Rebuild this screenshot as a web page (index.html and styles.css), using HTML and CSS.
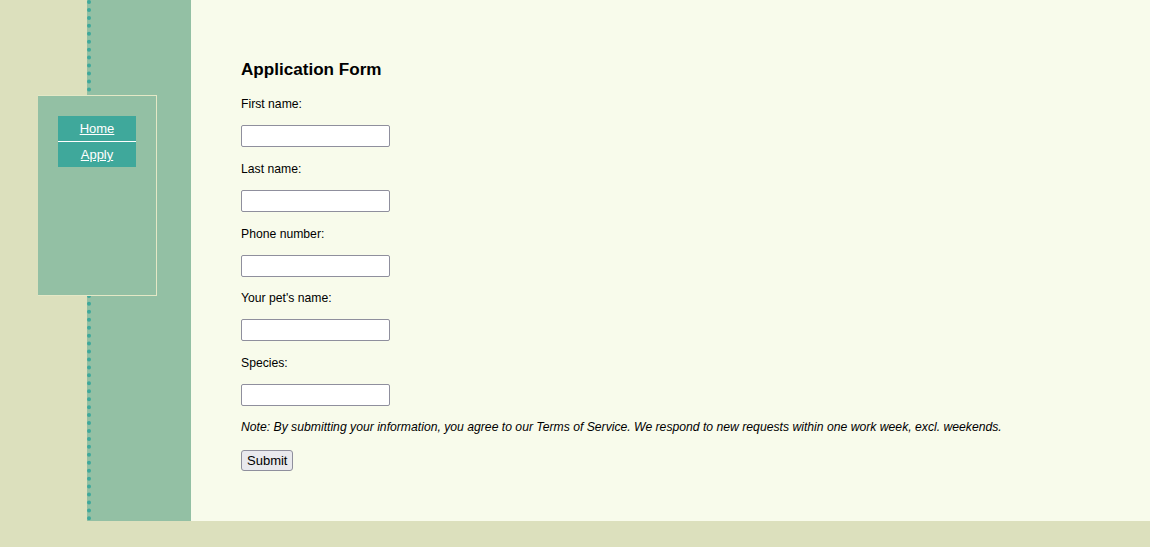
FILE: index.html
```html
<!DOCTYPE html>
<html>
<head>
<meta charset="utf-8">
<link rel="stylesheet" href="styles.css">
</head>
<body>
<div class="page">
  <div class="side">
    <nav class="navbox">
      <a class="navlink" href="#">Home</a>
      <a class="navlink" href="#">Apply</a>
    </nav>
  </div>
  <main class="content">
    <h2 class="title">Application Form</h2>
    <form class="form">
      <label class="lbl">First name:</label>
      <input class="inp" type="text">
      <label class="lbl">Last name:</label>
      <input class="inp" type="text">
      <label class="lbl">Phone number:</label>
      <input class="inp" type="text">
      <label class="lbl">Your pet's name:</label>
      <input class="inp" type="text">
      <label class="lbl">Species:</label>
      <input class="inp" type="text">
      <p class="note">Note: By submitting your information, you agree to our Terms of Service. We respond to new requests within one work week, excl. weekends.</p>
      <button class="btn" type="button">Submit</button>
    </form>
  </main>
</div>
</body>
</html>
```

FILE: styles.css
```css
html, body {
  margin: 0;
  padding: 0;
  background: #dce0bd;
  font-family: "Liberation Sans", Arial, sans-serif;
}
.page {
  display: flex;
  height: 521px;
  margin-left: 87px;
  position: relative;
}
.side {
  width: 100px;
  flex: none;
  background: #93c0a4;
  border-left: 4px dotted #3fa89b;
}
.navbox {
  position: absolute;
  left: -49px;
  top: 95px;
  width: 98px;
  height: 179px;
  padding: 20px 0 0 20px;
  background: #93c0a4;
  border: 1px solid #e4e8c6;
  border-left: none;
  display: flex;
  flex-direction: column;
  align-items: flex-start;
}
.navlink {
  display: block;
  width: 78px;
  height: 25px;
  line-height: 25px;
  background: #3fa89b;
  color: #ffffff;
  font-size: 13px;
  text-align: center;
  text-decoration: underline;
}
.navlink + .navlink {
  border-top: 1px solid #ffffff;
}
.content {
  flex: 1;
  background: #f8fbeb;
  padding: 59px 0 0 50px;
}
.title {
  margin: 0 0 16px 0;
  font-size: 17.1px;
  line-height: 22px;
  font-weight: bold;
  color: #000;
}
.form {
  display: flex;
  flex-direction: column;
  align-items: flex-start;
}
.lbl {
  font-size: 12.2px;
  line-height: 14px;
  color: #000;
  margin-bottom: 14px;
}
.inp {
  box-sizing: border-box;
  width: 149px;
  height: 22px;
  margin: 0 0 14.75px 0;
  padding: 1px 2px;
  border: 1px solid #8f8f9d;
  border-radius: 2px;
  background: #fff;
}
.inp:last-of-type {
  margin-bottom: 14px;
}
.note {
  margin: 0 0 16px 0;
  font-size: 12.2px;
  line-height: 14px;
  font-style: italic;
  color: #000;
}
.btn {
  height: 21px;
  padding: 1px 5px;
  font-family: "Liberation Sans", Arial, sans-serif;
  font-size: 13px;
  color: #000;
  background: #e9e9ed;
  border: 1px solid #8f8f9d;
  border-radius: 3px;
}
```
